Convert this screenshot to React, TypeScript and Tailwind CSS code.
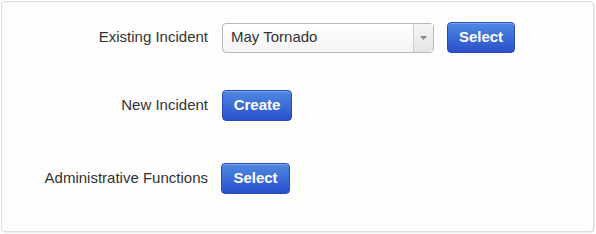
/**
 * Incident chooser panel — pick an existing incident, create one, or open admin.
 */

import { useState } from "react"

const btn =
  "h-[31px] rounded-[4px] border border-[#2b48b8] bg-gradient-to-b from-[#4f88e4] to-[#2b4fcb] text-[15px] font-bold text-white shadow-[inset_0_1px_0_rgba(255,255,255,0.25)]"

export default function App() {
  const [incident, setIncident] = useState("May Tornado")

  return (
    <div
      className="h-[234px] w-[596px] bg-white p-px text-[#333]"
      style={{ fontFamily: '"Liberation Sans", Arial, sans-serif' }}
    >
      <div className="flex h-[231px] w-[593px] flex-col rounded-[4px] border border-[#dddddd] bg-[#fdfdfd] pt-[20px] shadow-[1px_1px_1px_rgba(0,0,0,0.08)]">
        {/* Existing incident */}
        <div className="flex items-center">
          <span className="w-[206px] text-right text-[15px]">Existing Incident</span>
          <div className="relative ml-[14px] flex h-[30px] w-[212px] items-center rounded-[4px] border border-[#b9b9b9] bg-gradient-to-b from-white to-[#f4f4f4]">
            <span className="flex-1 pl-[8px] text-[15px]">{incident}</span>
            <div className="flex h-full w-[20px] items-center justify-center border-l border-[#d0d0d0] bg-gradient-to-b from-[#f6f6f6] to-[#e4e4e4]">
              <svg width="7" height="4" viewBox="0 0 7 4">
                <path d="M0 0h7L3.5 4z" fill="#888" />
              </svg>
            </div>
            <select
              className="absolute inset-0 opacity-0"
              value={incident}
              onChange={(e) => setIncident(e.target.value)}
            >
              <option>May Tornado</option>
            </select>
          </div>
          <button className={`${btn} ml-[13px] w-[68px]`}>Select</button>
        </div>

        {/* New incident */}
        <div className="mt-[37px] flex items-center">
          <span className="w-[206px] text-right text-[15px]">New Incident</span>
          <button className={`${btn} ml-[14px] w-[70px]`}>Create</button>
        </div>

        {/* Admin */}
        <div className="mt-[42px] flex items-center">
          <span className="w-[206px] text-right text-[15px]">Administrative Functions</span>
          <button className={`${btn} ml-[13px] w-[69px]`}>Select</button>
        </div>
      </div>
    </div>
  )
}
